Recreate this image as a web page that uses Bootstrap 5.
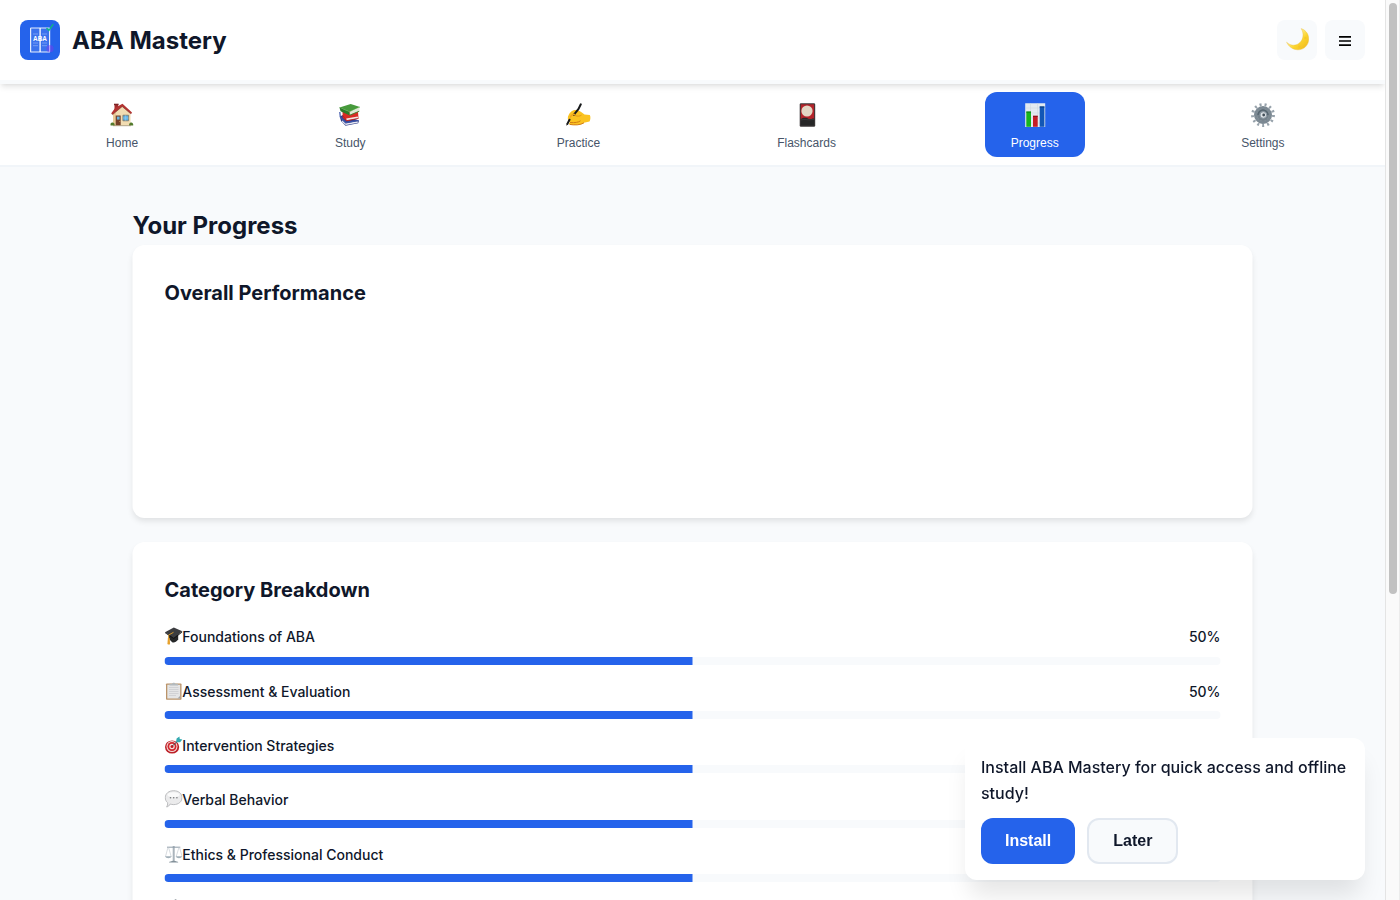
<!DOCTYPE html>
<html lang="en">
<head>
<meta charset="utf-8">
<meta name="viewport" content="width=device-width, initial-scale=1">
<title>ABA Mastery</title>
<link href="https://cdn.jsdelivr.net/npm/bootstrap@5.3.0/dist/css/bootstrap.min.css" rel="stylesheet">
<script src="https://cdn.jsdelivr.net/npm/bootstrap@5.3.0/dist/js/bootstrap.bundle.min.js" defer></script>
<style>
  :root { --blue: #2563eb; --ink: #0f172a; --slate: #475569; --pale: #f8fafc; --line: #e2e8f0; }
  body { font-family: Inter, sans-serif; line-height: 1.6; color: var(--ink); background: var(--pale); height: 100vh; overflow: hidden; }
  .app-pane { width: 1385px; height: 100vh; }
  .app-header { height: 80px; padding: 20px; background: #fff; }
  .header-wrap { box-shadow: 0 4px 6px -1px rgba(0,0,0,.1), 0 2px 4px -2px rgba(0,0,0,.06); z-index: 2; }
  .load-track { height: 4px; background: var(--pale); }
  .brand-name { font-size: 24px; font-weight: 700; line-height: 38px; padding-top: 2px; }
  .tool-btn { width: 40px; height: 40px; border: 0; border-radius: 8px; background: var(--pale); }
  .tab-row { height: 82.8px; padding: 8px; background: #fff; border-bottom: 2px solid #f1f5f9; }
  .tab-btn { width: 100px; height: 65.3px; padding: 11px 0 0; gap: 9px; border: 0; border-radius: 12px; background: transparent; color: var(--slate); font: 12px/14px "Liberation Sans", sans-serif; }
  .tab-btn.active { background: var(--blue); color: #fff; }
  .page-main { width: 1200px; margin-left: 92px; padding: 40px 40px 0; transform: translateX(.5px); }
  h1, h2 { font-weight: 700; line-height: 1.6; margin: 0; }
  h1 { font-size: 24px; }
  h2 { font-size: 20px; margin-bottom: 20px; }
  .panel { background: #fff; border-radius: 12px; padding: 32px; margin-bottom: 24px; box-shadow: 0 4px 6px -1px rgba(0,0,0,.1); }
  .chart-space { height: 157px; }
  .cat-row { margin-bottom: 16px; font-size: 14px; font-weight: 500; line-height: 22.4px; }
  .cat-head { height: 22.4px; margin-bottom: 8px; }
  .cat-head svg { width: 18px; height: 18px; margin: 1px -.2px 0 0; }
  .progress { --bs-progress-height: 8px; --bs-progress-bg: #f8fafc; --bs-progress-border-radius: 4px; --bs-progress-bar-bg: #2563eb; }
  .install-box { position: fixed; right: 35px; bottom: 20px; width: 400px; padding: 16px; background: #fff; border-radius: 12px; box-shadow: 0 20px 25px -5px rgba(0,0,0,.1); font-weight: 500; z-index: 5; }
  .install-box p { margin-bottom: 11px; padding-top: 1px; font-size: 16px; line-height: 25.8px; }
  .act-btn { height: 46px; padding: 0 24px; border: 0; border-radius: 12px; background: var(--blue); color: #fff; font: 600 16px/18px "Liberation Sans", sans-serif; }
  .act-btn.second { background: var(--pale); border: 2px solid var(--line); color: var(--ink); }
  .scroll-rail { width: 15px; padding: 3px 2px 0 3px; background: #fafafa; border-left: 1px solid #e4e4e4; border-right: 1px solid #ececec; }
  .scroll-grip { width: 8px; height: 591px; border-radius: 4px; background: #c1c1c1; }
</style>
</head>
<body class="d-flex">
<div class="app-pane flex-shrink-0 overflow-hidden">
  <div class="header-wrap position-relative">
    <header class="app-header d-flex justify-content-between align-items-center">
      <div class="d-flex align-items-center" style="gap:12px">
        <svg width="40" height="40" viewBox="0 0 40 40" aria-hidden="true">
          <rect width="40" height="40" rx="8" fill="#2563eb"/>
          <rect x="10.6" y="8" width="19" height="24" rx=".6" fill="#3b72ed" stroke="#e5edfd" stroke-width="1.2"/>
          <path d="M20.1 8v24" stroke="#fff" stroke-width="1.3"/>
          <path d="M13 14h5M22 14h5M13 23h5M22 23h5M13 25.7h5M22 25.7h5" stroke="#8fb0f6" stroke-width=".7"/>
          <circle cx="30" cy="28.7" r="3.6" fill="#7c3aed" fill-opacity=".45"/>
          <text x="20" y="21.3" text-anchor="middle" font-family="Liberation Sans, sans-serif" font-size="6.4" font-weight="700" fill="#fff">ABA</text>
          <path d="M26.5 8l2.4 2.4L33.3 4.2" fill="none" stroke="#10b981" stroke-width="1.4"/>
        </svg>
        <span class="brand-name">ABA Mastery</span>
      </div>
      <div class="d-flex gap-2">
        <button class="tool-btn p-0 d-flex align-items-center justify-content-center" aria-label="Theme">
          <svg width="24" height="24" viewBox="-.4 0 24 24">
            <defs><linearGradient id="moon" x1="0" y1="0" x2="1" y2="1"><stop offset=".3" stop-color="#fff2a0"/><stop offset=".6" stop-color="#fbd52f"/><stop offset="1" stop-color="#efb31c"/></linearGradient></defs>
            <path d="M15.800.6C21 2.3 24 7.2 23.2 12.6 22.4 18.3 17.7 22 12.2 21.8 7.300 21.500 3.300 18.600 1.200 14.200 4.500 17.500 9.200 18.200 13 15.800c5-3.300 6-9.800 2.800-15.200z" fill="url(#moon)" stroke="#eabc32" stroke-width=".4"/>
            <circle cx="20" cy="10" r="1.2" fill="#f5c726"/><circle cx="14" cy="18.600" r="1.200" fill="#f4c32a"/>
          </svg>
        </button>
        <button class="tool-btn p-0 d-flex align-items-center justify-content-center" aria-label="Menu">
          <svg width="12" height="14" viewBox="0 0 12 14"><path d="M0 3.800h12M0 8h12M0 12.200h12" stroke="#000" stroke-width="1.700"/></svg>
        </button>
      </div>
    </header>
    <div class="load-track"></div>
  </div>
  <nav class="tab-row d-flex justify-content-around">
    <button class="tab-btn d-flex flex-column align-items-center">
      <svg width="24" height="24" viewBox="0 0 24 24">
        <path d="M4.500 1.200h3.600v7H4.500z" fill="#a32c2c"/><path d="M4 .7h4.600v1.500H4z" fill="#7c2425"/>
        <path d="M3 9.500L12 1.500l8.500 8V22.500H3z" fill="#f1dcb2"/><path d="M3 10h3v12.500H3z" fill="#e9cb98"/>
        <path d="M1.300 10.300L5.500 4.500 12.500.8 22 9.500 21.200 11 12.200 3.500 2.600 11.600z" fill="#b33432"/><path d="M1.500 10.700l1.200.8 9.500-8 8.700 7.400" fill="none" stroke="#752522" stroke-width=".6"/>
        <path d="M5.700 12.500h5v9.800h-5z" fill="#764129"/><path d="M6.900 13.600h2.700v3H6.900z" fill="#67b4df"/><path d="M9.500 18h.7v.9h-.7z" fill="#e5b768"/>
        <path d="M12.900 12.200h5.700v5.600h-5.700z" fill="#5aaee4" stroke="#7d6d55" stroke-width=".7"/><path d="M15.700 12.200v5.600M12.900 15h5.700" stroke="#a9d9f3" stroke-width=".5"/>
        <path d="M.6 22.600c-.5-2 .5-3.300 2-3.100 1.600 0 2 1.200 2.200 3.100zM19 22.600c0-2 .7-3.300 2.100-3.200 1.600 0 2.500 1.400 2.100 3.200z" fill="#527a2c"/><path d="M3 22.700h18" stroke="#938462" stroke-width=".7"/>
      </svg><span>Home</span></button>
    <button class="tab-btn d-flex flex-column align-items-center">
      <svg width="24" height="24" viewBox="0 0 24 24">
        <path d="M1.800 13.500L5 12l16 5.500-.8 2.700-12.700 2.500L3 18z" fill="#313f8a"/><path d="M4.200 17.300l3.500 3.200 12-2.300.2 1.600-12 2.300L4 19z" fill="#e8eaf2"/><path d="M1.800 9l.5 5 5.300 5.500 12.700-2" fill="none" stroke="#3c55aa" stroke-width="1.200"/>
        <path d="M4.500 8.500L20 8.500l.5 6.700-11.800 3-4-3.500z" fill="#d92b24"/><path d="M8.200 15.400l11.500-2 .5 1.900-11.500 2.300z" fill="#f4e6e2"/><path d="M4.800 12.500l3.700 5.200 12-2.300" fill="none" stroke="#b41d20" stroke-width=".8"/>
        <path d="M1.500 4.500L12.700.9 22 4.100 11.500 8.800z" fill="#479a3c"/><path d="M1.500 4.500L11.500 8.800 22 4.100" fill="none" stroke="#67b957" stroke-width=".7"/><path d="M1.500 4.600l10 4.400.3 3.400L2.500 8.200z" fill="#2c7b2a"/><path d="M11.700 9L21.500 4.600l-.3 3.300-9.300 4z" fill="#dfe8d5"/><path d="M11.800 12.200l9.500-4" stroke="#39882f" stroke-width=".9"/>
      </svg><span>Study</span></button>
    <button class="tab-btn d-flex flex-column align-items-center">
      <svg width="26" height="24" viewBox="-1 0 26 24">
        <path d="M2 13.500C3.500 9.300 6.500 6.700 9.500 6.900c3.500.200 6.500 2.500 9 4.500l5.300.7c1 2 .7 4.700-.3 6.500l-5.500 1.200c-2.800 2.300-9.400 2.400-14.500 1.800-.8-.8-.5-1.800.7-2.100-1.800-1.300-2.900-3.500-2.200-6z" fill="#fbc321"/>
        <path d="M4 19.500c5 .5 8.500-.2 10.500-1.700M18 19.800C14.500 22.300 8 22.200 3.700 21.400" fill="none" stroke="#d17c14" stroke-width="1"/><path d="M9 12.500c2.500 1 5 .8 6.500-.4" fill="none" stroke="#de911a" stroke-width=".9"/>
        <path d="M14.800 1.300L12.500 6 7.800 11.800M3.500 16.700L1.400 20.900" fill="none" stroke="#17191b" stroke-width="2" stroke-linecap="round"/><path d="M.4 23l.4-2.700 1.300.8z" fill="#222"/><path d="M4.200 14.500c.8-2.300 2.500-3.600 4.800-3" fill="none" stroke="#f1a51d" stroke-width="1.300"/>
      </svg><span>Practice</span></button>
    <button class="tab-btn d-flex flex-column align-items-center">
      <svg width="24" height="24" viewBox="0 0 24 24">
        <rect x="4.700" y=".3" width="15.500" height="23.400" rx="1.300" fill="#3b3738"/><path d="M5.800 1.300h13.300V16H5.800z" fill="#b3232a"/><circle cx="12" cy="8" r="5.600" fill="#e3d6c4"/><path d="M5.800 16c3-2 6-1.500 8 0 2 .7 3.500-1 5.300-.5v7H5.800z" fill="#262627"/><path d="M5.800 17c4-1.500 8 .7 13.300-.6" fill="none" stroke="#444" stroke-width=".6"/>
      </svg><span>Flashcards</span></button>
    <button class="tab-btn active d-flex flex-column align-items-center">
      <svg width="24" height="24" viewBox="0 0 24 24">
        <path d="M2.200.2h20V24h-20z" fill="#e3eaf0"/><path d="M2.200 5h20M2.200 10h20M2.200 15h20M2.200 20h20M7.500.2V24M14.500.2V24" stroke="#c8d4dd" stroke-width=".5"/>
        <path d="M3.300 8.600h4.700v15.200H3.300z" fill="#17b51e"/><path d="M10 12.800h4.700v11H10z" fill="#c51c25"/><path d="M16.700 3.500h4.700v20.300h-4.700z" fill="#1256b5"/>
        <path d="M3.300 8.600h4.700v1H3.300z" fill="#087a12"/><path d="M10 12.800h4.700v1H10z" fill="#821018"/><path d="M16.700 3.500h4.700v1h-4.700z" fill="#073878"/>
      </svg><span>Progress</span></button>
    <button class="tab-btn d-flex flex-column align-items-center">
      <svg width="24" height="24" viewBox="0 0 24 24">
        <circle cx="12" cy="12" r="10.500" fill="none" stroke="#97a2ab" stroke-width="2.900" stroke-dasharray="2 3.075"/>
        <circle cx="12" cy="12" r="7.500" fill="#a8b1b8" stroke="#7c8993" stroke-width="3"/><circle cx="12" cy="12" r="6" fill="#74818b"/><path d="M7 12a5 5 0 0 1 10 0" fill="none" stroke="#566570" stroke-width="1.500"/>
        <circle cx="12.300" cy="12" r="3.300" fill="#dce1e5" stroke="#8b98a2"/><circle cx="12.700" cy="12" r="1.400" fill="#424e58"/>
      </svg><span>Settings</span></button>
  </nav>
  <main class="page-main">
    <h1>Your Progress</h1>
    <section class="panel"><h2>Overall Performance</h2><div class="chart-space"></div></section>
    <section class="panel">
      <h2>Category Breakdown</h2>
      <div class="cat-row"><div class="cat-head d-flex justify-content-between"><div class="d-flex">
        <svg viewBox="0 0 18 18"><path d="M4 7.500l9.700 0v5c-2 2.600-4 3.500-6 2.800L4.500 12z" fill="#252729"/><path d="M.5 5.200L9.300.600 17.800 4.300 9.200 10.900z" fill="#3b3d40"/><path d="M.5 5.200l8.700 5.700 8.600-6.600v1l-8.500 6.600L.5 6z" fill="#111"/><path d="M9 5.300L4.200 8v4.300" fill="none" stroke="#d89a2d" stroke-width="1"/><path d="M3.400 11h1.800l.4 6.200c-1 .6-2 .5-2.700-.2z" fill="#e7a12c"/></svg><span>Foundations of ABA</span></div><span>50%</span></div><div class="progress"><div class="progress-bar" style="width:50%"></div></div></div>
      <div class="cat-row"><div class="cat-head d-flex justify-content-between"><div class="d-flex">
        <svg viewBox="0 0 18 18"><rect x="1.500" y="1.400" width="15.500" height="16.300" rx=".8" fill="#bb946a"/><path d="M2.800 2.700h12.900v13.700H2.800z" fill="#e4e5e6"/><path d="M4.500 5.500h9.500M4.500 7.500h9.500M4.500 9.500h9.500M4.500 11.500h9.500M4.500 13.500h7" stroke="#cbcdd0" stroke-width=".8"/><path d="M5 3.500V1.800h2.500C8 .4 10.500.4 11 1.800h2.500v1.700z" fill="#b4babd"/><path d="M13 16.400l2.700-2.700v2.700z" fill="#a3a6a8"/></svg><span>Assessment &amp; Evaluation</span></div><span>50%</span></div><div class="progress"><div class="progress-bar" style="width:50%"></div></div></div>
      <div class="cat-row"><div class="cat-head d-flex justify-content-between"><div class="d-flex">
        <svg viewBox="0 0 18 18"><ellipse cx="7.600" cy="11" rx="7.100" ry="6.600" fill="#bd2027"/><circle cx="7.500" cy="10.500" r="5.500" fill="#f1dfdc"/><circle cx="7.500" cy="10.500" r="4.500" fill="#d3272e"/><circle cx="7.500" cy="10.500" r="2.700" fill="#f3e7e3"/><circle cx="7.500" cy="10.500" r="1.500" fill="#c91820"/><path d="M7.500 10.300l7-6.500" stroke="#354b53" stroke-width=".9"/><path d="M11.500 6.200l.6-3.700 2.800-2 .4 2.500 2.600.6-2.300 2.600z" fill="#35aab1"/></svg><span>Intervention Strategies</span></div></div><div class="progress"><div class="progress-bar" style="width:50%"></div></div></div>
      <div class="cat-row"><div class="cat-head d-flex justify-content-between"><div class="d-flex">
        <svg viewBox="0 0 18 18"><path d="M9.200.700c4.900 0 8.300 2.800 8.300 6.900s-3.400 7-8.300 7c-1.300 0-2.500-.2-3.500-.6-.8 1.600-1.900 2.600-3.600 3 .7-1.100 1.200-2.700 1-4.300C1.400 11.400.8 9.600.8 7.600c0-4.100 3.500-6.900 8.400-6.900z" fill="#ebebec" stroke="#adafb1" stroke-width=".8"/><ellipse cx="9" cy="4.700" rx="6" ry="2.500" fill="#fafafa"/><g fill="#77797b"><circle cx="6" cy="7.800" r=".8"/><circle cx="9.200" cy="7.800" r=".8"/><circle cx="12.400" cy="7.800" r=".8"/></g></svg><span>Verbal Behavior</span></div></div><div class="progress"><div class="progress-bar" style="width:50%"></div></div></div>
      <div class="cat-row"><div class="cat-head d-flex justify-content-between"><div class="d-flex">
        <svg viewBox="0 0 18 18"><path d="M8.200 1h2v14.500h-2z" fill="#aab4bc"/><path d="M2.500 2.200h13.300" stroke="#8d9ca7" stroke-width="1"/><path d="M3.500 2.300L1 11.500M4 2.300l2.700 9.200M14.500 2.300L11.700 11.500M15 2.300l2.600 9.200" stroke="#bdc5cb" stroke-width=".6"/><path d="M.5 11.300h6.700c-.7 2.600-5.900 2.600-6.700 0zM11.200 11.300h6.500c-.7 2.600-5.800 2.600-6.500 0z" fill="#a3b0b9"/><path d="M4.500 17.500c0-1.100 2.500-1 4.700-2.200 2 1.200 4.600 1.100 4.600 2.200z" fill="#829099"/></svg><span>Ethics &amp; Professional Conduct</span></div></div><div class="progress"><div class="progress-bar" style="width:50%"></div></div></div>
      <div class="cat-row"><div class="cat-head d-flex"><svg viewBox="0 0 18 18"><path d="M10.500.3l2.500.8-4 9-3-1.300z" fill="#717c84"/><path d="M4 16.500h10c2-3 1.500-7-2-8" fill="none" stroke="#66727b" stroke-width="1.500"/></svg></div></div>
    </section>
  </main>
</div>
<div class="scroll-rail flex-shrink-0"><div class="scroll-grip"></div></div>
<aside class="install-box">
  <p>Install ABA Mastery for quick access and offline study!</p>
  <div class="d-flex" style="gap:12px"><button class="act-btn">Install</button><button class="act-btn second">Later</button></div>
</aside>
</body>
</html>
